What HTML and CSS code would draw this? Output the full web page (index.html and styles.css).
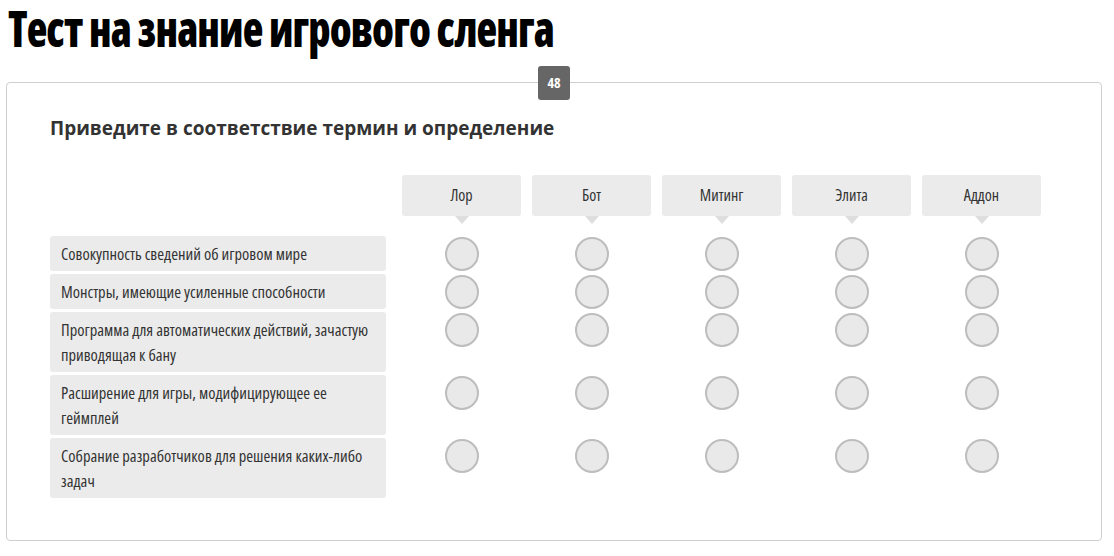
FILE: index.html
```
<!DOCTYPE html>
<html lang="ru">
<head>
  <meta charset="UTF-8">
  <meta name="viewport" content="width=device-width, initial-scale=1.0">
  <title>Тест на знание игрового сленга</title>
  <link rel="stylesheet" href="styles.css">
</head>
<body>
  <div class="page">
    <h1 class="page-title">Тест на знание игрового сленга</h1>

    <div class="question">
      <span class="question-num">48</span>
      <h2 class="question-title">Приведите в соответствие термин и определение</h2>

      <div class="matrix">
        <div class="matrix-corner"></div>
        <div class="term"><span>Лор</span></div>
        <div class="term"><span>Бот</span></div>
        <div class="term"><span>Митинг</span></div>
        <div class="term"><span>Элита</span></div>
        <div class="term"><span>Аддон</span></div>

        <div class="definition">Совокупность сведений об игровом мире</div>
        <div class="cell"><span class="radio"></span></div>
        <div class="cell"><span class="radio"></span></div>
        <div class="cell"><span class="radio"></span></div>
        <div class="cell"><span class="radio"></span></div>
        <div class="cell"><span class="radio"></span></div>

        <div class="definition">Монстры, имеющие усиленные способности</div>
        <div class="cell"><span class="radio"></span></div>
        <div class="cell"><span class="radio"></span></div>
        <div class="cell"><span class="radio"></span></div>
        <div class="cell"><span class="radio"></span></div>
        <div class="cell"><span class="radio"></span></div>

        <div class="definition">Программа для автоматических действий, зачастую приводящая к бану</div>
        <div class="cell"><span class="radio"></span></div>
        <div class="cell"><span class="radio"></span></div>
        <div class="cell"><span class="radio"></span></div>
        <div class="cell"><span class="radio"></span></div>
        <div class="cell"><span class="radio"></span></div>

        <div class="definition">Расширение для игры, модифицирующее ее геймплей</div>
        <div class="cell"><span class="radio"></span></div>
        <div class="cell"><span class="radio"></span></div>
        <div class="cell"><span class="radio"></span></div>
        <div class="cell"><span class="radio"></span></div>
        <div class="cell"><span class="radio"></span></div>

        <div class="definition">Собрание разработчиков для решения каких-либо задач</div>
        <div class="cell"><span class="radio"></span></div>
        <div class="cell"><span class="radio"></span></div>
        <div class="cell"><span class="radio"></span></div>
        <div class="cell"><span class="radio"></span></div>
        <div class="cell"><span class="radio"></span></div>
      </div>
    </div>
  </div>
</body>
</html>
```
FILE: styles.css
```
:root {
  --text-color: #333;
  --box-color: #ebebeb;
  --border-color: #cfcfcf;
}

body {
  margin: 0;
  font-family: 'Open Sans', 'Noto Sans', sans-serif;
  font-stretch: 75%;
  color: var(--text-color);
  background: #fff;
}

.page {
  padding: 0 12px 0 6px;
}

/* the original heading face is narrower than Open Sans Condensed */
.page-title {
  margin: -6px 0 0 2px;
  font-size: 49px;
  line-height: 68px;
  font-weight: 800;
  letter-spacing: -1px;
  color: #000;
  transform: scaleX(0.869);
  transform-origin: left center;
}

.question {
  position: relative;
  margin-top: 20px;
  border: 1px solid var(--border-color);
  border-radius: 4px;
  padding: 30px 0 42px 43px;
}

.question-num {
  position: absolute;
  top: -17px;
  left: 50%;
  transform: translateX(-50%);
  width: 32px;
  height: 34px;
  line-height: 34px;
  text-align: center;
  background: #666;
  color: #fff;
  font-size: 14px;
  font-weight: 700;
  border-radius: 3px;
}

.question-title {
  margin: 0 0 32px;
  font-size: 19px;
  line-height: 30px;
  font-weight: 700;
  font-stretch: 100%;
  color: var(--text-color);
}

.matrix {
  display: grid;
  grid-template-columns: 352px repeat(5, 130px);
  row-gap: 3px;
}

.term {
  margin-bottom: 17px;
}

.term span {
  position: relative;
  display: block;
  width: 119px;
  height: 41px;
  line-height: 41px;
  text-align: center;
  font-size: 16px;
  background: var(--box-color);
  border-radius: 3px;
}

.term span::after {
  content: "";
  position: absolute;
  left: 50%;
  top: 100%;
  margin-left: -7px;
  border-left: 7px solid transparent;
  border-right: 7px solid transparent;
  border-top: 8px solid #dedede;
}

.definition {
  width: 336px;
  box-sizing: border-box;
  padding: 5px 11px;
  font-size: 16.5px;
  line-height: 25px;
  background: var(--box-color);
  border-radius: 3px;
}

.cell {
  width: 119px;
  display: flex;
  justify-content: center;
  align-items: flex-start;
}

.radio {
  box-sizing: border-box;
  width: 34px;
  height: 34px;
  margin-top: 1px;
  border: 2px solid #bdbdbd;
  border-radius: 50%;
  background: #e9e9e9;
}
```
